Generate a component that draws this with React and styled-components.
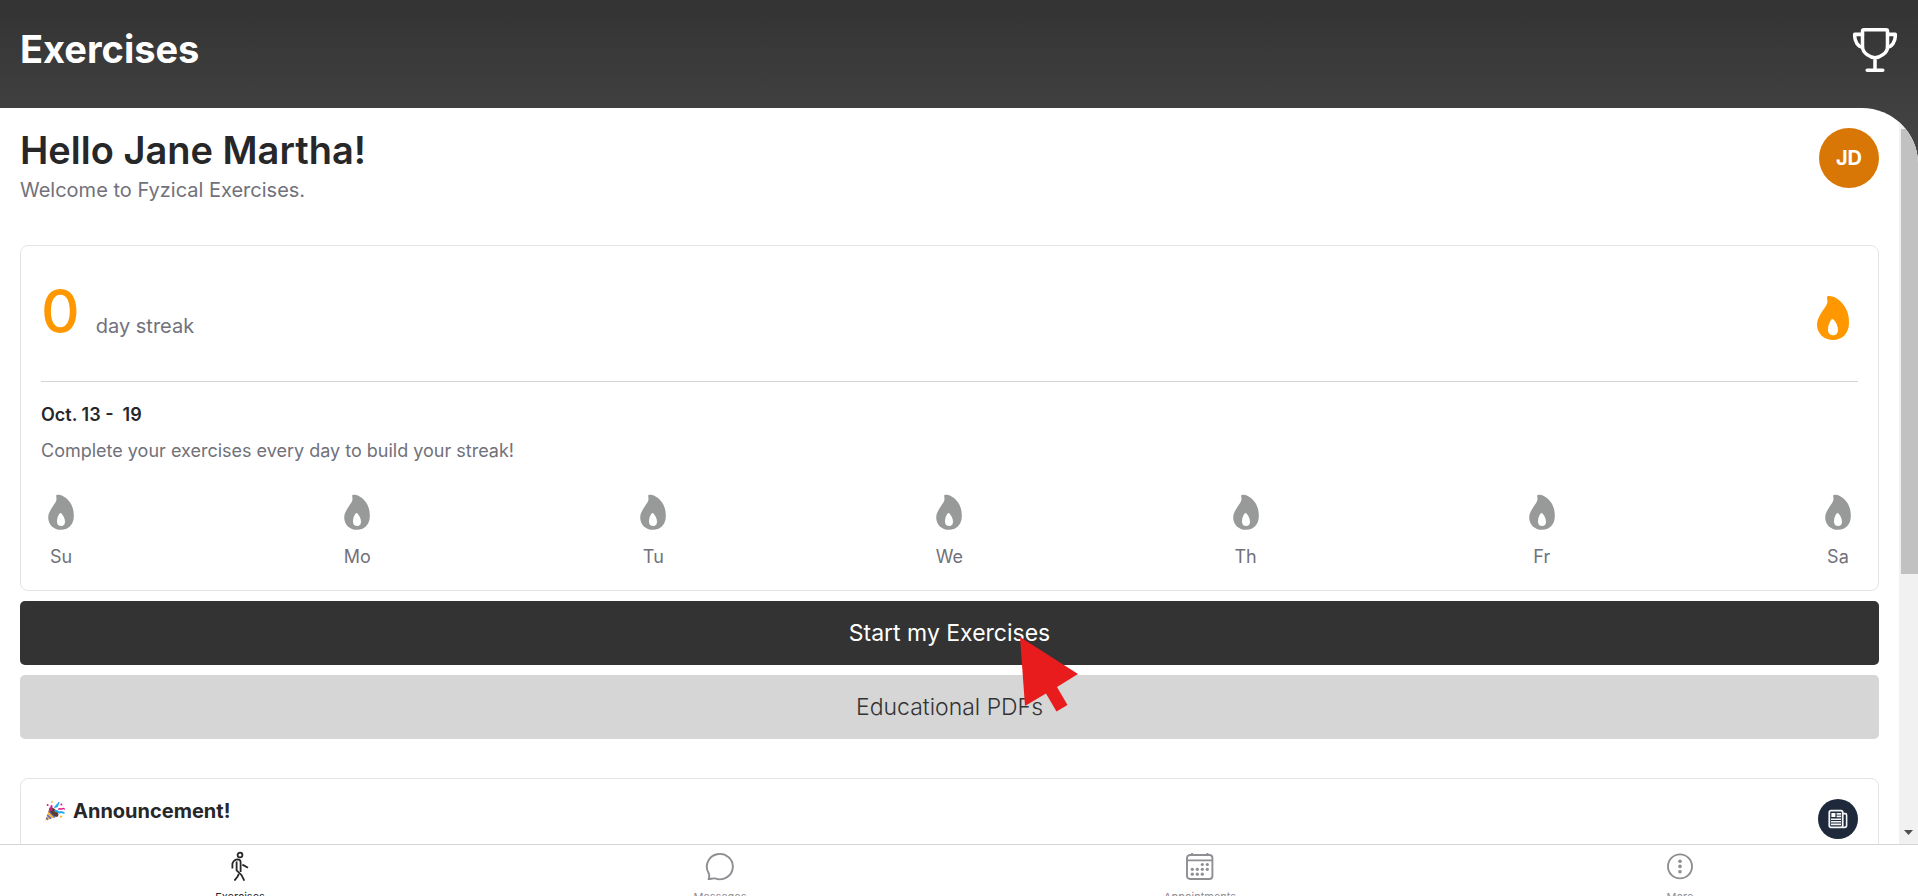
import React from "react";
import styled, { createGlobalStyle } from "styled-components";
import { IoTrophyOutline } from "react-icons/io5";

const DAYS = ["Su", "Mo", "Tu", "We", "Th", "Fr", "Sa"];

const TABS = [
  { label: "Exercises", icon: WalkIcon, active: true },
  { label: "Messages", icon: BubbleIcon },
  { label: "Appointments", icon: CalendarIcon },
  { label: "More", icon: MoreIcon },
];

function FlameIcon({ size, color }) {
  return (
    <svg width={size} height={size} viewBox="0 0 50 50" aria-hidden="true">
      <path
        fill={color}
        fillRule="evenodd"
        d="M19 3.4C18.8 2.4 20.2 2 21.8 2.1C25 2.3 28.6 4 31.7 6.7C35 9.6 37.8 13.6 39.3 17.7C40.6 21.2 41 25 41 29C41 39.5 34 46 25 46C16 46 9 39.5 9 30.5C9 26 11.2 22.4 14 17.7C16.6 13.8 19.6 10.6 19.4 7.2C19.3 5.8 19.1 4.6 19 3.4ZM23.2 25.7C23.9 24.7 24.8 24.7 25.6 25.6C28 28.6 30 32 30 35.8C30 39.2 28.2 41.3 25.2 41.3C22 41.3 20 39.2 20 35.8C20 32 21.2 28.6 23.2 25.7Z"
      />
    </svg>
  );
}

function WalkIcon() {
  return (
    <svg width="30" height="30" viewBox="0 0 30 30" aria-hidden="true">
      <g fill="none" stroke="currentColor" strokeWidth="1.8">
        <circle cx="15" cy="4" r="2.4" />
        <path d="M7.4 17.5V12.6C8.4 10 10.4 8.5 12.6 8.4C14.6 8.4 15.6 9.2 15.6 11V21" />
        <path d="M11.6 10.4V19.4L16.6 24.2L19.3 29.7" />
        <path d="M13.8 22.8L12.6 25.6L9.4 29.6" />
        <path d="M17.4 13.6L23 16.8" />
      </g>
    </svg>
  );
}

function BubbleIcon() {
  return (
    <svg width="30" height="30" viewBox="0 0 30 30" aria-hidden="true">
      <path
        d="M3.6 28.1C4.5 26 4.5 24 3.6 22A13 12.7 0 1 1 10 27.4C8 27.1 6 27.9 3.6 28.1Z"
        fill="none"
        stroke="currentColor"
        strokeWidth="1.9"
        strokeLinejoin="round"
      />
    </svg>
  );
}

function CalendarIcon() {
  const dots = [
    [17, 13.5], [22, 13.5],
    [7, 18.3], [12, 18.3], [17, 18.3], [22, 18.3],
    [7, 23.2], [12, 23.2], [17, 23.2],
  ];
  return (
    <svg width="30" height="30" viewBox="0 0 30 30" aria-hidden="true">
      <g fill="none" stroke="currentColor" strokeWidth="1.9">
        <rect x="2" y="4" width="25.4" height="24" rx="3" />
        <path d="M2 9.4H27.4M7 2V4M22.4 2V4" />
      </g>
      {dots.map(([x, y]) => (
        <circle key={`${x}-${y}`} cx={x + 0.3} cy={y} r="1.6" fill="currentColor" />
      ))}
    </svg>
  );
}

function MoreIcon() {
  return (
    <svg width="30" height="30" viewBox="0 0 30 30" aria-hidden="true">
      <circle cx="15" cy="15.4" r="12" fill="none" stroke="currentColor" strokeWidth="1.9" />
      <circle cx="15" cy="10.2" r="1.8" fill="currentColor" />
      <circle cx="15" cy="15.4" r="1.8" fill="currentColor" />
      <circle cx="15" cy="20.8" r="1.8" fill="currentColor" />
    </svg>
  );
}

function NewsIcon() {
  return (
    <svg width="20" height="20" viewBox="0 0 20 20" aria-hidden="true">
      <g fill="none" stroke="#f4f5f7">
        <rect x="1.3" y="1.6" width="13.4" height="16.8" rx="1.6" strokeWidth="1.8" />
        <path d="M15 4.6H17.4Q18.6 4.6 18.6 6V16.6Q18.6 18.4 16.6 18.4H14" strokeWidth="1.6" />
        <path d="M8.6 4.9H13M8.6 7.4H13M3 10.2H13M3 12.8H13M3 15.4H13" strokeWidth="1.6" />
      </g>
      <rect x="3.4" y="4" width="4" height="4" fill="#fff" />
    </svg>
  );
}

function PartyIcon() {
  return (
    <svg width="20" height="20" viewBox="0 0 20 20" aria-hidden="true">
      <path d="M0.4 19.6L4.6 6.6L13.2 15.2Z" fill="#f5b93a" />
      <path d="M3.6 9.8L10 16.4M2.2 14L6 17.6M1.2 16.8L3 18.6" stroke="#5b6bd6" strokeWidth="1.6" />
      <ellipse cx="8.8" cy="11" rx="6" ry="2.8" transform="rotate(45 8.8 11)" fill="#5c3b33" />
      <path d="M6.6 10C5 7.6 7.4 6.6 6.2 4.2" fill="none" stroke="#e3168b" strokeWidth="2" />
      <path d="M9.4 6.4L14 1.2L12.4 5.8Z" fill="#1fa9ee" stroke="#1fa9ee" />
      <path d="M9.6 10.4C13 8.4 13.2 12.6 15 11.4S17.6 12.6 19.4 11.6" fill="none" stroke="#1fa9ee" strokeWidth="2" />
      <path d="M13.4 8.6C15 6.6 15.8 9 17.2 7.8S19 8.6 19.8 7.6" fill="none" stroke="#e3168b" strokeWidth="1.5" />
      <circle cx="2.6" cy="4" r="1" fill="#e3168b" />
      <circle cx="7" cy="1" r="0.9" fill="#f5b93a" />
      <circle cx="16.4" cy="3.6" r="1" fill="#e3168b" />
      <circle cx="16" cy="15.6" r="1.2" fill="#f5b93a" />
    </svg>
  );
}

function StreakCard() {
  return (
    <Card>
      <StreakTop>
        <StreakCount>0</StreakCount>
        <StreakLabel>day streak</StreakLabel>
        <FlameIcon size={50} color="#ff9800" />
      </StreakTop>
      <WeekTitle>Oct. 13 -&nbsp; 19</WeekTitle>
      <WeekHint>Complete your exercises every day to build your streak!</WeekHint>
      <Week>
        {DAYS.map((day) => (
          <Day key={day}>
            <FlameIcon size={40} color="#979a99" />
            <span>{day}</span>
          </Day>
        ))}
      </Week>
    </Card>
  );
}

function App() {
  return (
    <>
      <GlobalStyle />
      <Page>
        <Header>
          <h1>Exercises</h1>
          <TrophyButton type="button" aria-label="Achievements">
            <IoTrophyOutline />
          </TrophyButton>
        </Header>

        <Panel>
          <Content>
            <Greeting>
              <div>
                <h2>Hello Jane Martha!</h2>
                <p>Welcome to Fyzical Exercises.</p>
              </div>
              <Avatar type="button">JD</Avatar>
            </Greeting>

            <StreakCard />

            <Actions>
              <ActionButton type="button" $primary>
                Start my Exercises
              </ActionButton>
              <ActionButton type="button">Educational PDFs</ActionButton>
              <Pointer width="60" height="76" viewBox="0 0 60 76" aria-hidden="true">
                <path d="M0 0L58 37L37 50L47.5 68L36.5 74.5L26 56.5L5 69Z" fill="#e81c1c" />
              </Pointer>
            </Actions>

            <Card>
              <Announcement>
                <PartyIcon />
                <h3>Announcement!</h3>
                <NewsButton type="button" aria-label="News">
                  <NewsIcon />
                </NewsButton>
              </Announcement>
            </Card>
          </Content>
          <ScrollTrack aria-hidden="true">
            <ScrollThumb />
            <ScrollArrow width="9" height="5" viewBox="0 0 9 5">
              <path d="M0 0H9L4.5 5Z" fill="#505050" />
            </ScrollArrow>
          </ScrollTrack>
        </Panel>

        <TabBar>
          {TABS.map(({ label, icon: Icon, active }) => (
            <Tab key={label} href="#" $active={active}>
              <Icon />
              <span>{label}</span>
            </Tab>
          ))}
        </TabBar>
      </Page>
    </>
  );
}

export default App;

const GlobalStyle = createGlobalStyle`
  * {
    box-sizing: border-box;
    margin: 0;
  }

  body {
    font-family: Inter, "Liberation Sans", sans-serif;
    color: #27272a;
  }

  button {
    border: 0;
    padding: 0;
    font-family: inherit;
    cursor: pointer;
  }

  svg {
    display: block;
    flex-shrink: 0;
  }
`;

const Page = styled.div`
  display: flex;
  flex-direction: column;
  height: 100vh;
  overflow: hidden;
  background: linear-gradient(#333, #464646 160px);
`;

const Header = styled.header`
  display: flex;
  justify-content: space-between;
  align-items: flex-start;
  padding: 25px 18px 33px 20px;
  color: #fff;

  > h1 {
    font-size: 38px;
    line-height: 48px;
    font-weight: 700;
  }
`;

const TrophyButton = styled.button`
  background: none;
  color: inherit;
  font-size: 50px;

  path {
    stroke-width: 36px;
  }
`;

const Panel = styled.main`
  display: flex;
  flex: 1;
  min-height: 0;
  overflow: hidden;
  background: #fff;
  border-top-right-radius: 56px;
`;

const Content = styled.div`
  flex: 1;
  padding: 20px;
  overflow: hidden;
`;

const Greeting = styled.div`
  display: flex;
  justify-content: space-between;
  align-items: flex-start;
  margin-bottom: 37px;

  h2 {
    font-size: 38px;
    line-height: 44px;
    font-weight: 600;
  }

  p {
    font-size: 20px;
    line-height: 36px;
    color: #71717a;
  }
`;

const Avatar = styled.button`
  width: 60px;
  height: 60px;
  border-radius: 50%;
  background: #d97706;
  color: #fff;
  font-size: 20px;
  font-weight: 700;
`;

const Card = styled.section`
  padding: 20px;
  border: 1px solid #e4e4e7;
  border-radius: 8px;
`;

const StreakTop = styled.div`
  display: flex;
  align-items: baseline;
  padding: 15px 0 37px;
  border-bottom: 1px solid #d1d5d4;

  > svg {
    align-self: flex-end;
    margin-left: auto;
  }
`;

const StreakCount = styled.span`
  margin-bottom: 3px;
  font-size: 60px;
  line-height: 60px;
  font-weight: 500;
  color: #ff9800;
`;

const StreakLabel = styled.span`
  margin-left: 16px;
  font-size: 20px;
  line-height: 24px;
  color: #71717a;
`;

const WeekTitle = styled.h3`
  margin-top: 21px;
  font-size: 18px;
  line-height: 24px;
  font-weight: 600;
`;

const WeekHint = styled.p`
  margin-top: 12px;
  font-size: 18px;
  line-height: 24px;
  color: #71717a;
`;

const Week = styled.div`
  display: flex;
  justify-content: space-between;
  margin-top: 30px;
`;

const Day = styled.div`
  display: flex;
  flex-direction: column;
  align-items: center;
  gap: 11px;
  width: 40px;
  font-size: 18px;
  line-height: 26px;
  color: #71717a;
`;

const Actions = styled.div`
  position: relative;
  display: flex;
  flex-direction: column;
  gap: 10px;
  margin: 10px 0 39px;
`;

const ActionButton = styled.button`
  height: 64px;
  border-radius: 5px;
  background: ${({ $primary }) => ($primary ? "#333" : "#d6d6d6")};
  color: ${({ $primary }) => ($primary ? "#fff" : "#333")};
  font-size: 23px;
  font-weight: ${({ $primary }) => ($primary ? 400 : 300)};
`;

const Pointer = styled.svg`
  position: absolute;
  top: 36px;
  left: calc(50% + 70px);
  pointer-events: none;
`;

const Announcement = styled.div`
  display: flex;
  align-items: flex-start;
  gap: 8px;
  padding-left: 4px;

  > svg {
    margin-top: 2px;
  }

  > h3 {
    font-size: 20px;
    line-height: 24px;
    font-weight: 700;
  }
`;

const NewsButton = styled.button`
  display: flex;
  align-items: center;
  justify-content: center;
  width: 40px;
  height: 40px;
  margin-left: auto;
  border-radius: 50%;
  background: #1e293b;
`;

const ScrollTrack = styled.div`
  display: flex;
  flex-direction: column;
  align-items: center;
  justify-content: space-between;
  width: 19px;
  padding: 21px 0 9px 2px;
  background: #f1f1f1;
`;

const ScrollThumb = styled.div`
  width: 100%;
  height: 63%;
  background: #c1c1c1;
`;

const ScrollArrow = styled.svg`
  margin-right: 2px;
`;

const TabBar = styled.nav`
  display: grid;
  grid-template-columns: repeat(4, 1fr);
  flex: 0 0 52px;
  margin-right: -2px;
  overflow: hidden;
  background: #fff;
  border-top: 1px solid #d4d4d4;
`;

const Tab = styled.a`
  display: flex;
  flex-direction: column;
  align-items: center;
  gap: 9px;
  padding-top: 6px;
  font-size: 11px;
  line-height: 14px;
  text-decoration: none;
  color: ${({ $active }) => ($active ? "#27272a" : "#8e8e93")};
`;
